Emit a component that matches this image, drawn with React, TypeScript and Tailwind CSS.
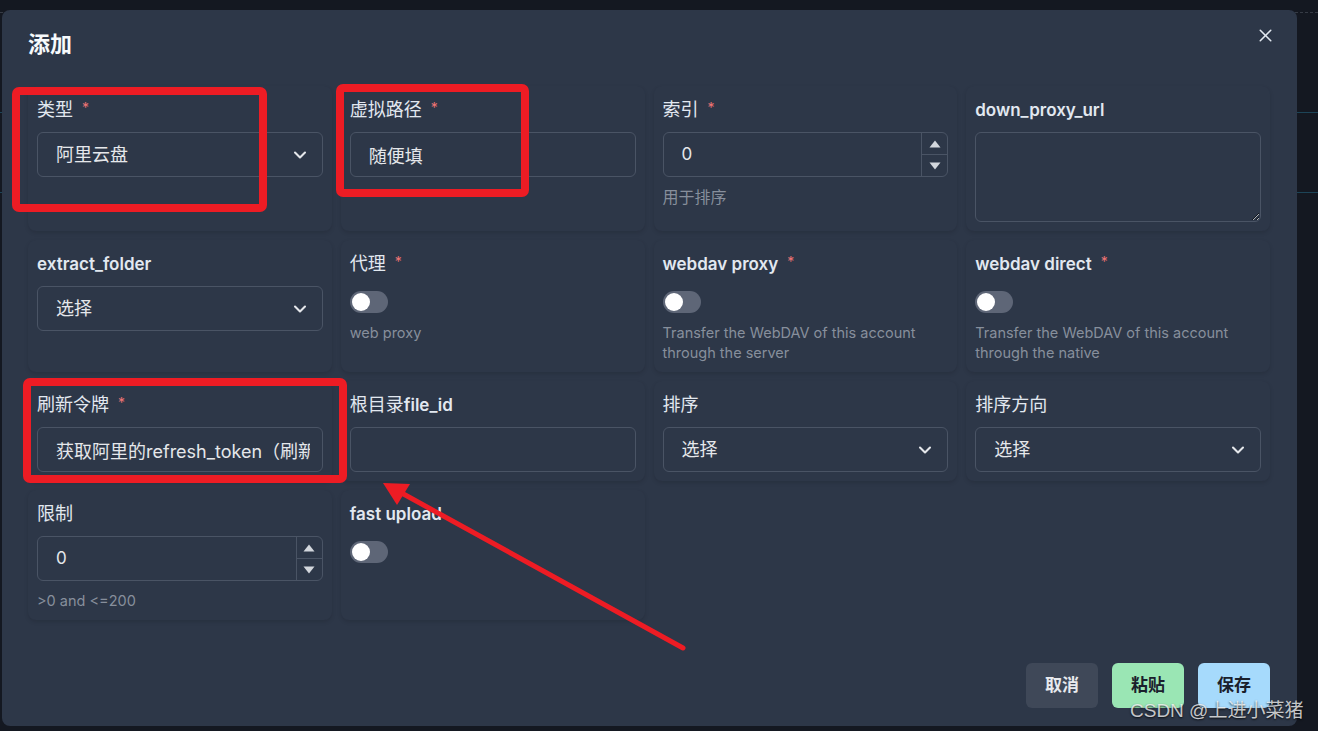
import { ChevronDown, X } from 'lucide-react';
import type { ReactNode } from 'react';

const font = "font-['Inter','Noto_Sans_CJK_SC',sans-serif]";

function Label({ children, required }: { children: ReactNode; required?: boolean }) {
  return (
    <div className="flex items-start h-6 text-[17px] leading-6 font-semibold text-[#e2e8f0] whitespace-nowrap">
      {children}
      {required && <span className="ml-[9px] text-[14px] leading-5 font-normal text-[#ef7474]">*</span>}
    </div>
  );
}

function Cjk({ children }: { children: ReactNode }) {
  return <span className="font-normal text-[18px]">{children}</span>;
}

function Field({ label, required, helper, children }: { label: ReactNode; required?: boolean; helper?: ReactNode; children?: ReactNode }) {
  return (
    <div className="rounded-lg bg-[#2d3748] shadow-[0_2px_4px_rgba(0,0,0,0.12)] px-[9px] pt-3 pb-[9px]">
      <Label required={required}>{label}</Label>
      {children}
      {helper && <p className="mt-[10px] text-[14.5px] leading-5 text-[#878f9c]">{helper}</p>}
    </div>
  );
}

function TextBox({ value }: { value: string }) {
  return (
    <input
      readOnly
      value={value}
      className="mt-[10px] block h-[45px] w-full rounded-md border border-[#4a5465] bg-transparent pl-[18px] pr-3 text-[18px] text-[#e5e7eb] outline-none"
    />
  );
}

function Select({ value }: { value: string }) {
  return (
    <div className="mt-[10px] flex h-[45px] items-center justify-between rounded-md border border-[#4a5465] pl-[18px] pr-3 text-[18px] text-[#e5e7eb]">
      <span>{value}</span>
      <ChevronDown size={20} strokeWidth={2.5} className="text-[#e5e7eb]" />
    </div>
  );
}

function NumberBox({ value }: { value: string }) {
  return (
    <div className="mt-[10px] flex h-[45px] rounded-md border border-[#4a5465] text-[17px] text-[#e5e7eb]">
      <div className="flex flex-1 items-center pl-[18px]">{value}</div>
      <div className="flex w-[26px] flex-col border-l border-[#4a5465]">
        <div className="flex flex-1 items-center justify-center border-b border-[#4a5465]">
          <svg width="12" height="8" viewBox="0 0 12 8"><path d="M6 0.5 L11.5 7.5 L0.5 7.5 Z" fill="#d3d7dd" /></svg>
        </div>
        <div className="flex flex-1 items-center justify-center">
          <svg width="12" height="8" viewBox="0 0 12 8"><path d="M0.5 0.5 L11.5 0.5 L6 7.5 Z" fill="#d3d7dd" /></svg>
        </div>
      </div>
    </div>
  );
}

function Switch() {
  return (
    <div className="mt-[15px] flex h-[22px] w-[38px] items-center rounded-full bg-[#5e6677] px-[2px]">
      <div className="h-[18px] w-[18px] rounded-full bg-white" />
    </div>
  );
}

export default function App() {
  return (
    <div className={`relative h-[731px] w-[1318px] overflow-hidden bg-[#141821] ${font}`}>
      {/* page behind the modal */}
      <div className="h-[13px] border-b border-dashed border-[#363b45]" />
      <div className="h-[100px] border-b border-[#1d4457]" />
      <div className="h-[80px] border-b border-[#1d4457]" />

      {/* modal */}
      <div className="absolute left-[2px] top-[10px] flex h-[716px] w-[1295px] flex-col rounded-lg bg-[#2d3748] pl-[26px] pr-[27px] pb-[18px] pt-5">
        <h2 className="text-[22px] font-bold leading-7 text-[#f7fafc]">添加</h2>
        <button className="absolute right-[20px] top-[13px] flex h-6 w-6 items-center justify-center text-[#e2e8f0]">
          <X size={21} strokeWidth={1.8} />
        </button>

        <div className="mt-[28px] grid grid-cols-4 gap-[9px]">
          <Field label={<Cjk>类型</Cjk>} required>
            <Select value="阿里云盘" />
          </Field>
          <Field label={<Cjk>虚拟路径</Cjk>} required>
            <TextBox value="随便填" />
          </Field>
          <Field label={<Cjk>索引</Cjk>} required helper={<span className="text-[16px]">用于排序</span>}>
            <NumberBox value="0" />
          </Field>
          <Field label="down_proxy_url">
            <textarea readOnly className="mt-[10px] block h-[90px] w-full rounded-md border border-[#4a5465] bg-transparent px-4 py-2 text-[17px] text-[#e5e7eb] outline-none [color-scheme:dark]" />
          </Field>

          <Field label="extract_folder">
            <Select value="选择" />
          </Field>
          <Field label={<Cjk>代理</Cjk>} required helper="web proxy">
            <Switch />
          </Field>
          <Field label="webdav proxy" required helper="Transfer the WebDAV of this account through the server">
            <Switch />
          </Field>
          <Field label="webdav direct" required helper="Transfer the WebDAV of this account through the native">
            <Switch />
          </Field>

          <Field label={<Cjk>刷新令牌</Cjk>} required>
            <TextBox value="获取阿里的refresh_token（刷新令牌）" />
          </Field>
          <Field label={<><Cjk>根目录</Cjk>file_id</>}>
            <TextBox value="" />
          </Field>
          <Field label={<Cjk>排序</Cjk>}>
            <Select value="选择" />
          </Field>
          <Field label={<Cjk>排序方向</Cjk>}>
            <Select value="选择" />
          </Field>

          <Field label={<Cjk>限制</Cjk>} helper=">0 and <=200">
            <NumberBox value="0" />
          </Field>
          <Field label="fast upload">
            <Switch />
          </Field>
        </div>

        <div className="flex-1" />

        <div className="flex justify-end gap-[14px]">
          <button className="h-[45px] w-[72px] rounded-md bg-[#3f4858] text-[17px] font-bold text-[#e8eaee]">取消</button>
          <button className="h-[45px] w-[72px] rounded-md bg-[#9ae6b4] text-[17px] font-bold text-[#1a202c]">粘贴</button>
          <button className="h-[45px] w-[72px] rounded-md bg-[#a6dafc] text-[17px] font-bold text-[#1a202c]">保存</button>
        </div>
      </div>

      {/* screenshot annotations */}
      <svg className="pointer-events-none absolute inset-0" width="1318" height="731" viewBox="0 0 1318 731">
        <rect x="16" y="91" width="247" height="117" rx="3" fill="none" stroke="#ed1c24" strokeWidth="8" />
        <rect x="340" y="88" width="185" height="105" rx="3" fill="none" stroke="#ed1c24" strokeWidth="8" />
        <rect x="27" y="382" width="316" height="97" rx="3" fill="none" stroke="#ed1c24" strokeWidth="8" />
        <line x1="683" y1="648" x2="398" y2="491" stroke="#ed1c24" strokeWidth="5" strokeLinecap="round" />
        <polygon points="383,483 397,505 410,484" fill="#ed1c24" />
      </svg>
      <div className="pointer-events-none absolute left-[1130px] top-[699px] whitespace-nowrap text-[19px] leading-6 text-white/75 [text-shadow:0_1px_2px_rgba(0,0,0,0.8)] font-['Liberation_Sans','Noto_Sans_CJK_SC',sans-serif]">
        CSDN @上进小菜猪
      </div>
    </div>
  );
}
